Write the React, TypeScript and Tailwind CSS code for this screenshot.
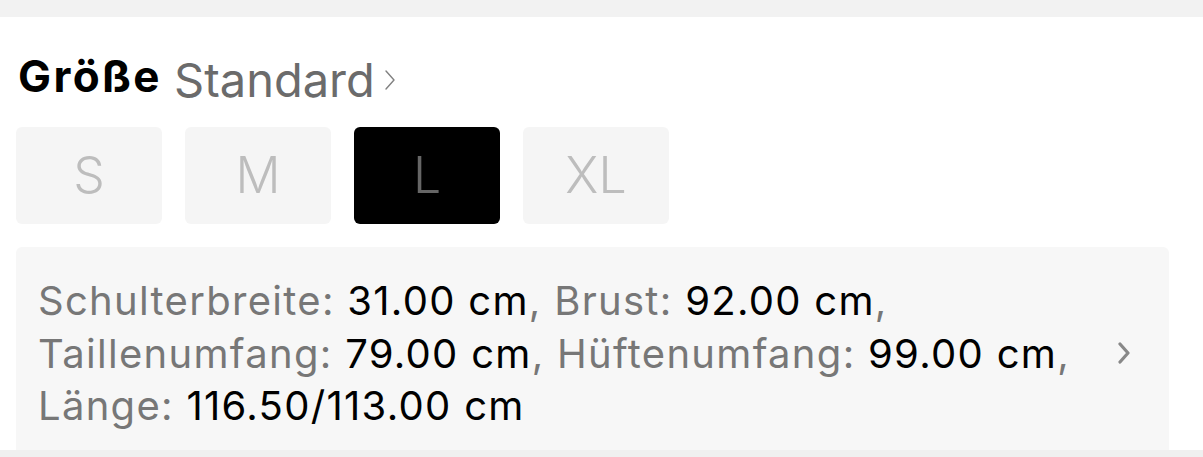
import React from 'react';

const sizes = ['S', 'M', 'L', 'XL'];

const Chevron = ({ className, width = 1.6 }: { className?: string; width?: number }) => (
  <svg viewBox="0 0 12 22" className={className} fill="none" stroke="currentColor" strokeWidth={width} strokeLinecap="round" strokeLinejoin="round">
    <path d="M2 2l8 9-8 9" />
  </svg>
);

const App = () => {
  const selected = 'L';

  return (
    <div className="w-[1203px] h-[457px] bg-white overflow-hidden flex flex-col font-['Inter',sans-serif]">
      <div className="h-[17px] bg-[#f2f2f2] shrink-0" />

      <div className="flex-1 px-[16px] flex flex-col">
        {/* Title */}
        <div className="flex items-start mt-[37px] pl-[2px]">
          <span className="text-[44px] font-bold text-black tracking-[2.4px] leading-none">Größe</span>
          <span className="ml-[12px] mt-[2px] text-[47px] text-[#6b6b6b] leading-none">Standard</span>
          <Chevron className="ml-[9px] mt-[15px] w-[12px] h-[22px] text-[#808080]" width={1.4} />
        </div>

        {/* Size options */}
        <div className="flex gap-[23px] mt-[24px]">
          {sizes.map((s) => (
            <div
              key={s}
              className={`w-[146px] h-[97px] rounded-[6px] flex items-center justify-center text-[50px] font-light ${
                s === selected ? 'bg-black text-[#666]' : 'bg-[#f5f5f5] text-[#bdbdbd]'
              }`}
            >
              {s}
            </div>
          ))}
        </div>

        {/* Measurements */}
        <div className="mt-[23px] w-[1153px] flex-1 bg-[#f7f7f7] rounded-t-[6px] flex items-start pl-[22px] pr-[37px]">
          <p className="flex-1 pt-[28px] text-[40px] leading-[52.5px] tracking-[1.3px] text-[#777]">
            Schulterbreite: <span className="text-black">31.00 cm</span>, Brust: <span className="text-black">92.00 cm</span>,
            <br />
            Taillenumfang: <span className="text-black">79.00 cm</span>, Hüftenumfang: <span className="text-black">99.00 cm</span>,
            <br />
            Länge: <span className="text-black">116.50/113.00 cm</span>
          </p>
          <Chevron className="mt-[95px] w-[16px] h-[22px] text-[#888]" width={3.2} />
        </div>
      </div>

      <div className="h-[7px] bg-[#f0f0f0] shrink-0" />
    </div>
  );
};

export default App;
